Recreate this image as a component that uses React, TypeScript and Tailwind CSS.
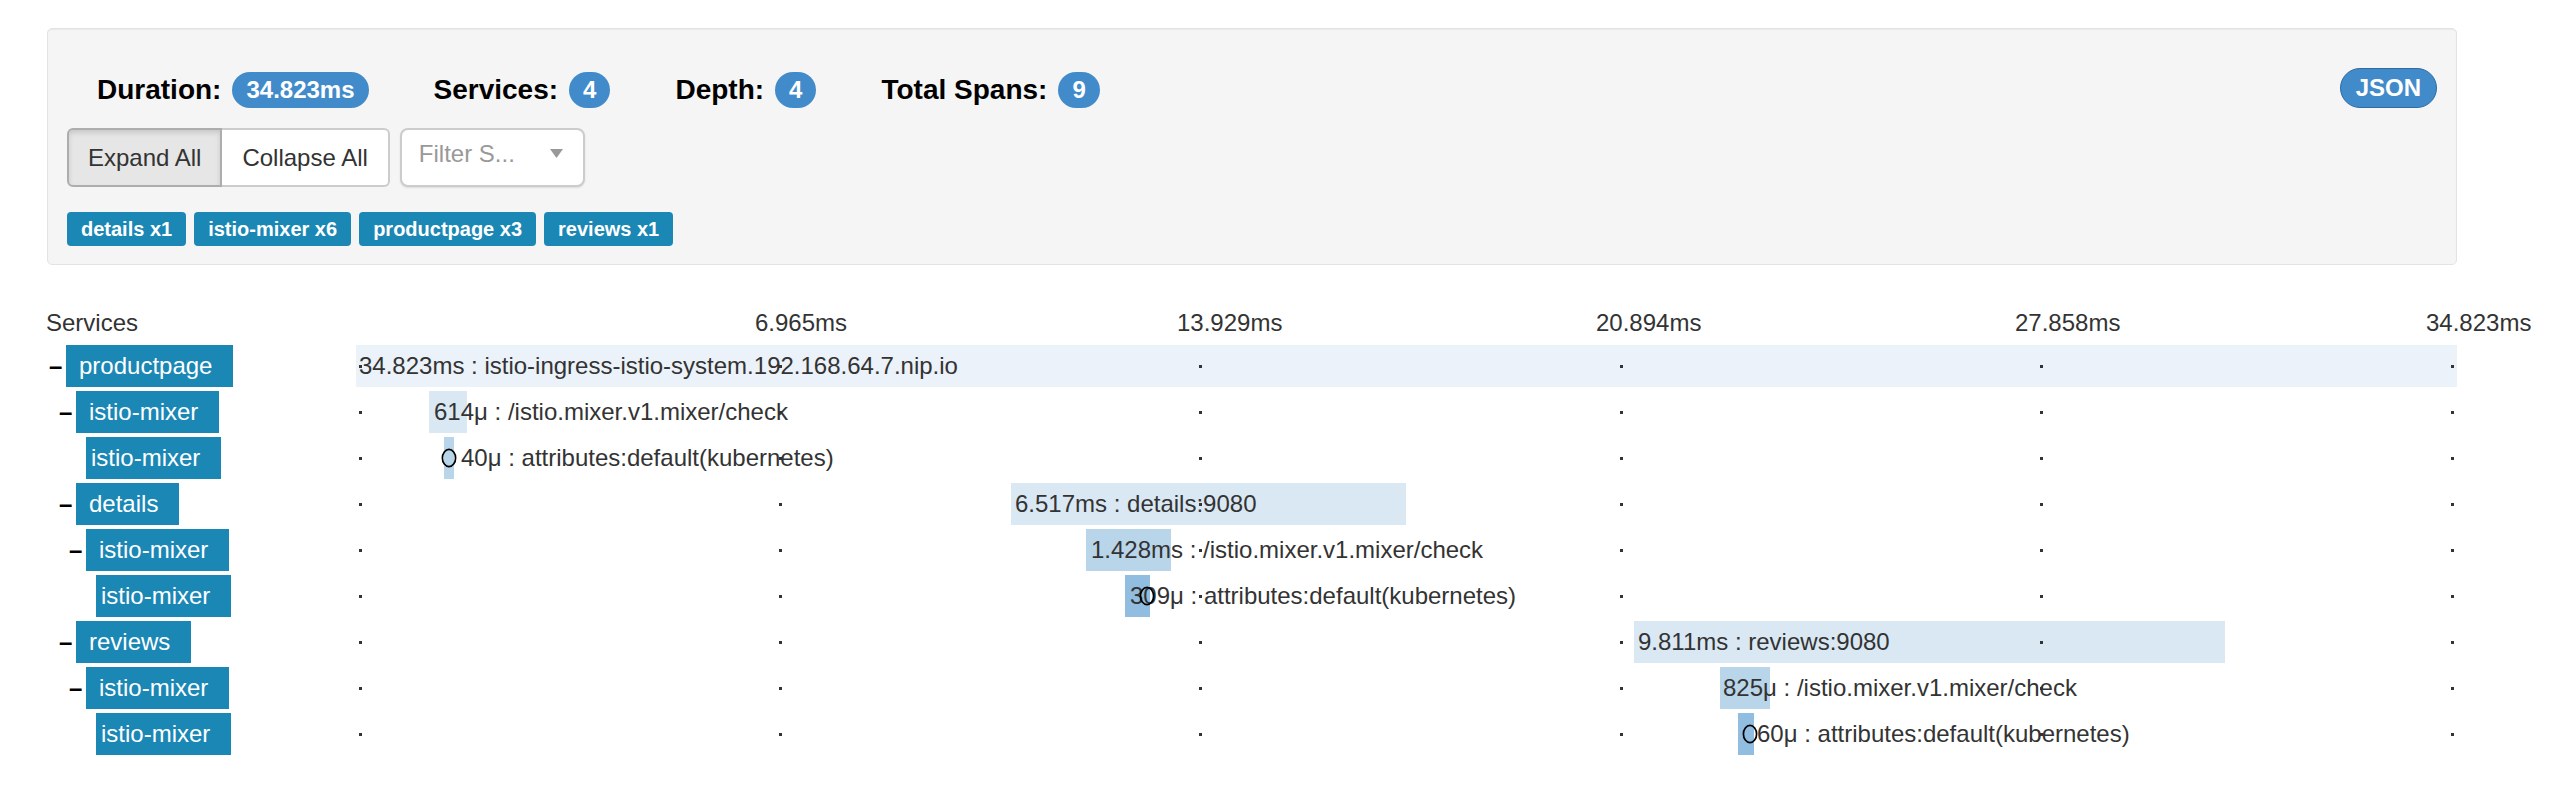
import React from "react";

type Row = {
  name: string;
  level: number;
  toggle: boolean;
  depth: number;
  barLeft: number;
  barWidth: number;
  text: string;
  textLeft: number;
  o?: number;
};

const rows: Row[] = [
  { name: "productpage", level: 0, toggle: true, depth: 0, barLeft: 0, barWidth: 2101, text: "34.823ms : istio-ingress-istio-system.192.168.64.7.nip.io", textLeft: 3 },
  { name: "istio-mixer", level: 1, toggle: true, depth: 1, barLeft: 73, barWidth: 38, text: "614μ : /istio.mixer.v1.mixer/check", textLeft: 78 },
  { name: "istio-mixer", level: 2, toggle: false, depth: 2, barLeft: 88, barWidth: 10, text: "40μ : attributes:default(kubernetes)", textLeft: 105, o: 85 },
  { name: "details", level: 1, toggle: true, depth: 1, barLeft: 655, barWidth: 395, text: "6.517ms : details:9080", textLeft: 659 },
  { name: "istio-mixer", level: 2, toggle: true, depth: 2, barLeft: 730, barWidth: 85, text: "1.428ms : /istio.mixer.v1.mixer/check", textLeft: 735 },
  { name: "istio-mixer", level: 3, toggle: false, depth: 3, barLeft: 769, barWidth: 25, text: "309μ : attributes:default(kubernetes)", textLeft: 774, o: 783 },
  { name: "reviews", level: 1, toggle: true, depth: 1, barLeft: 1278, barWidth: 591, text: "9.811ms : reviews:9080", textLeft: 1282 },
  { name: "istio-mixer", level: 2, toggle: true, depth: 2, barLeft: 1364, barWidth: 50, text: "825μ : /istio.mixer.v1.mixer/check", textLeft: 1367 },
  { name: "istio-mixer", level: 3, toggle: false, depth: 3, barLeft: 1382, barWidth: 16, text: "60μ : attributes:default(kubernetes)", textLeft: 1401, o: 1386 },
];

const indent = ["pl-0", "pl-[10px]", "pl-[20px]", "pl-[30px]"];
const depthColor = ["bg-[#ebf2f9]", "bg-[#dae8f4]", "bg-[#b9d5ea]", "bg-[#90bde0]"];
const dots = [3, 423, 843, 1264, 1684, 2095];
const labels = [
  { t: "6.965ms", x: 399 },
  { t: "13.929ms", x: 821 },
  { t: "20.894ms", x: 1240 },
  { t: "27.858ms", x: 1659 },
  { t: "34.823ms", x: 2070 },
];

function Stat({ label, value }: { label: string; value: string }) {
  return (
    <div className="flex items-center gap-[11px]">
      <span className="text-[28px] font-bold text-black leading-[36px]">{label}</span>
      <span className="h-[36px] rounded-full bg-[#428bca] px-[14px] text-[24px] font-bold text-white leading-[36px]">
        {value}
      </span>
    </div>
  );
}

export default function App() {
  return (
    <div className="w-[2556px] h-[800px] overflow-hidden bg-white font-['Liberation_Sans',Arial,sans-serif] text-[#333]">
      <div className="ml-[47px] mt-[28px] w-[2410px] rounded-[5px] border border-[#e3e3e3] bg-[#f5f5f5] px-[19px] pt-[39px] pb-[18px] shadow-[inset_0_1px_1px_rgba(0,0,0,0.05)]">
        <div className="flex items-end gap-[65px] pl-[30px]">
          <Stat label="Duration:" value="34.823ms" />
          <Stat label="Services:" value="4" />
          <Stat label="Depth:" value="4" />
          <Stat label="Total Spans:" value="9" />
          <button className="ml-auto h-[40px] rounded-full border border-[#2e6da4] bg-[#428bca] px-[15px] text-[24px] font-bold text-white leading-[38px]">
            JSON
          </button>
        </div>
        <div className="mt-[20px] flex gap-[10px]">
          <div className="flex">
            <button className="h-[59px] rounded-l-[6px] border-2 border-[#adadad] bg-[#e6e6e6] px-[19px] text-[24px] text-[#333] shadow-[inset_0_3px_5px_rgba(0,0,0,0.125)]">
              Expand All
            </button>
            <button className="h-[59px] rounded-r-[6px] border-2 border-l-0 border-[#ccc] bg-white px-[20px] text-[24px] text-[#333]">
              Collapse All
            </button>
          </div>
          <div className="flex h-[59px] w-[185px] items-center justify-between rounded-[8px] border-2 border-[#ccc] bg-white pb-[8px] pl-[17px] pr-[20px] shadow-[0_1px_2px_rgba(0,0,0,0.1)]">
            <span className="text-[24px] text-[#999]">Filter S...</span>
            <svg width="13" height="9" viewBox="0 0 13 9">
              <polygon points="0,0 13,0 6.5,9" fill="#999" />
            </svg>
          </div>
        </div>
        <div className="mt-[25px] flex gap-[8px]">
          {["details x1", "istio-mixer x6", "productpage x3", "reviews x1"].map((t) => (
            <span key={t} className="flex h-[34px] items-center rounded-[4px] bg-[#1a87b5] px-[14px] text-[20px] font-bold text-white">
              {t}
            </span>
          ))}
        </div>
      </div>

      <div className="ml-[46px] mt-[43px]">
        <div className="flex h-[30px]">
          <div className="w-[310px] text-[24px] leading-[30px]">Services</div>
          <div className="relative h-[30px] w-[2101px]">
            {labels.map((l) => (
              <span key={l.t} className="absolute top-0 whitespace-nowrap text-[24px] leading-[30px]" style={{ left: l.x }}>
                {l.t}
              </span>
            ))}
          </div>
        </div>
        <div className="mt-[7px] flex flex-col gap-[4px]">
          {rows.map((r, i) => (
            <div key={i} className="flex h-[42px]">
              <div className={`flex w-[310px] items-center ${indent[r.level]}`}>
                <span className="w-[20px] pl-[3px] text-[24px] font-bold leading-[42px] text-black">{r.toggle ? "–" : ""}</span>
                <span className={`flex h-[42px] items-center bg-[#1a87b5] pr-[21px] text-[24px] text-white ${r.toggle ? "pl-[13px]" : "pl-[5px]"}`}>
                  {r.name}
                </span>
              </div>
              <div className="relative h-[42px] w-[2101px]">
                <div className={`absolute top-0 h-[42px] ${depthColor[r.depth]}`} style={{ left: r.barLeft, width: r.barWidth }} />
                {dots.map((d) => (
                  <div key={d} className="absolute top-[20px] h-[3px] w-[3px] bg-[#333]" style={{ left: d }} />
                ))}
                <span className="absolute top-0 whitespace-nowrap text-[24px] leading-[42px] text-[#333]" style={{ left: r.textLeft }}>
                  {r.text}
                </span>
                {r.o !== undefined && (
                  <svg className="absolute top-[11px]" style={{ left: r.o }} width="16" height="20" viewBox="0 0 16 20">
                    <ellipse cx="8" cy="10" rx="6.6" ry="8.6" fill="none" stroke="#000" strokeWidth="1.7" />
                  </svg>
                )}
              </div>
            </div>
          ))}
        </div>
      </div>
    </div>
  );
}
